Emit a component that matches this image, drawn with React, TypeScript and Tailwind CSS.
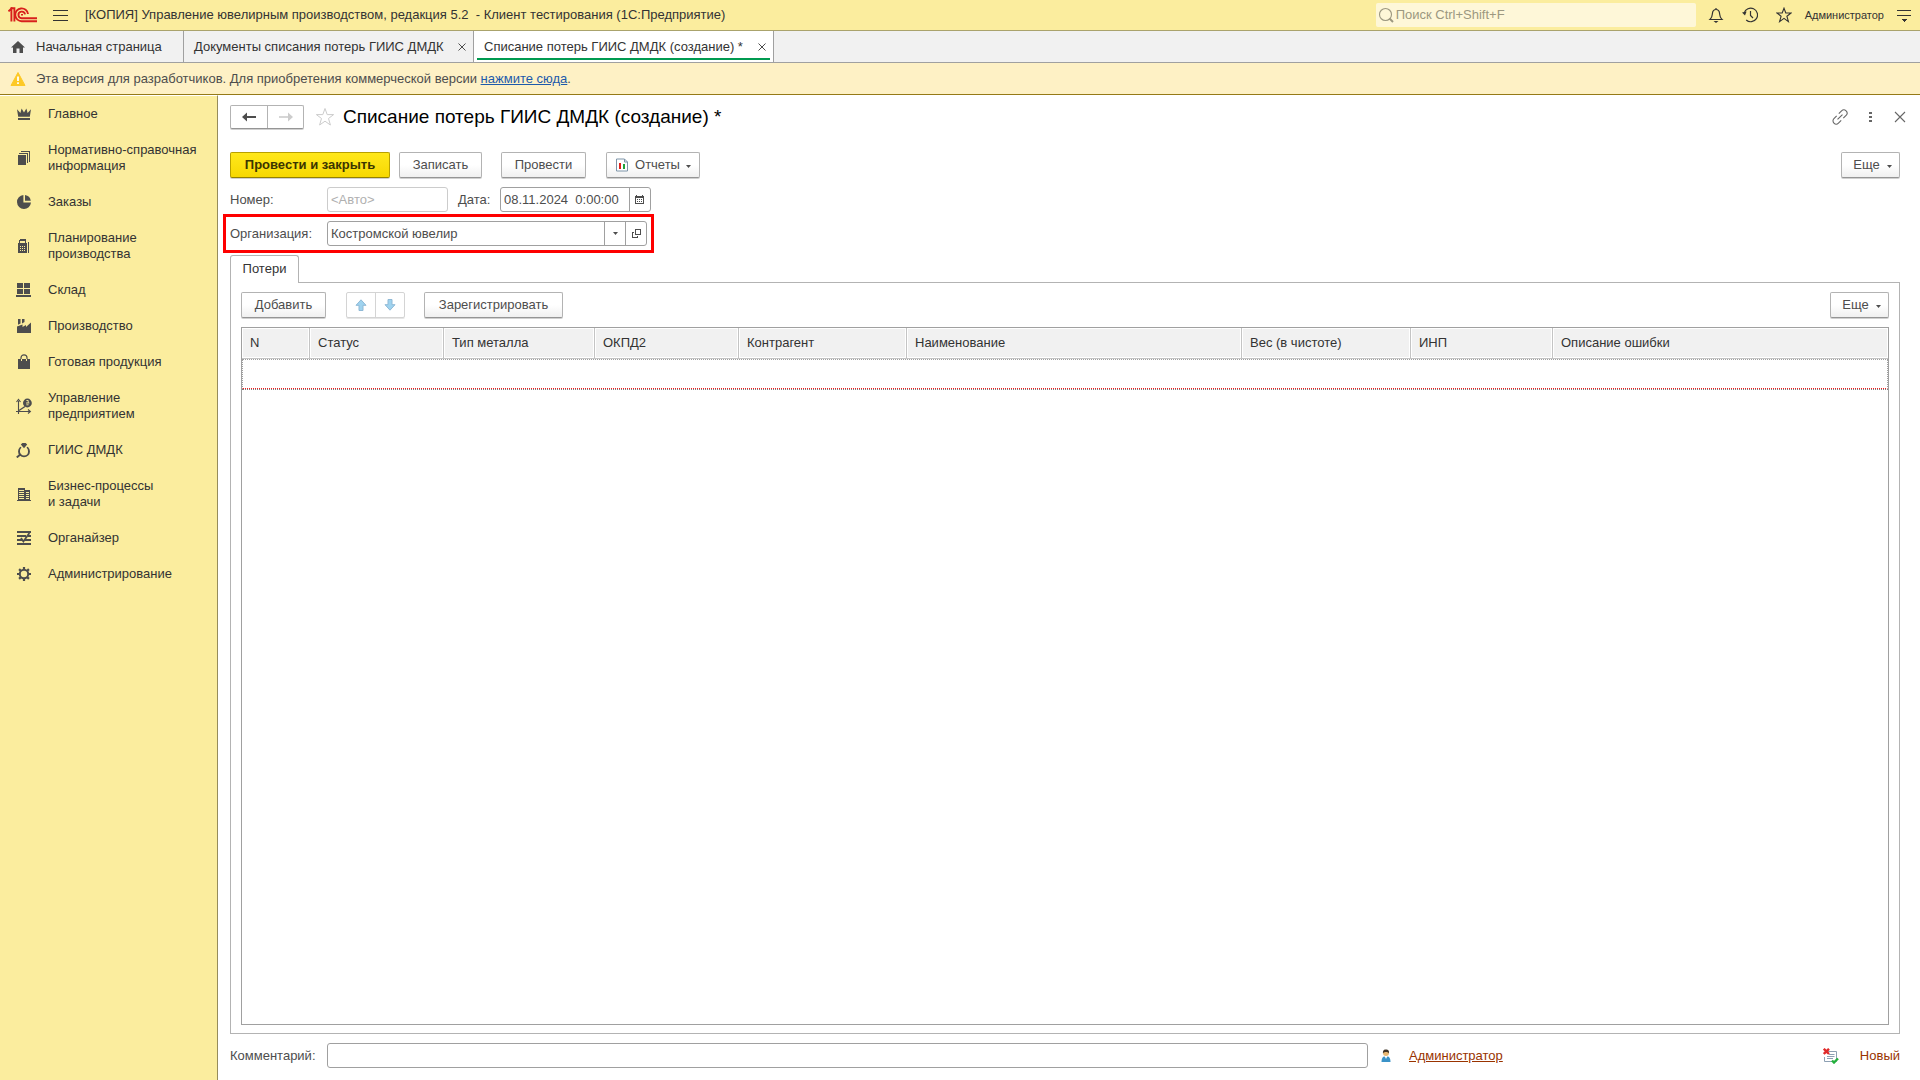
import type { ReactNode } from 'react';

type IconProps = { children: ReactNode; size?: number; className?: string; crisp?: boolean };

function Icon({ children, size = 16, className = '', crisp = false }: IconProps) {
  return (
    <svg
      width={size}
      height={size}
      viewBox={`0 0 ${size} ${size}`}
      fill="none"
      stroke="currentColor"
      shapeRendering={crisp ? 'crispEdges' : 'auto'}
      className={`shrink-0 ${className}`}
      aria-hidden="true"
    >
      {children}
    </svg>
  );
}

function Logo() {
  return (
    <svg width="30" height="16" viewBox="0 0 30 16" fill="none" stroke="#d8201c" strokeWidth="1.9" className="shrink-0" aria-label="1С">
      <path d="M0.5 4.4 L3.4 1.6 V14.6" />
      <path d="M2.5 1.2 H6.4 V14.6" />
      <path d="M20 7 A6.4 6.4 0 1 0 14 14.2 H29" />
      <path d="M17 7.4 A3.3 3.3 0 1 0 14 11.2 H29" />
      <path d="M13 7.8 h2" strokeWidth="1.4" />
    </svg>
  );
}

const solid = { fill: 'currentColor', stroke: 'none' };

const sections: { label: string[]; icon: ReactNode }[] = [
  {
    label: ['Главное'],
    icon: (
      <g {...solid}>
        <path d="M1 3.2 L4.4 7 L5.6 2.6 L8 6.6 L10.4 2.6 L11.6 7 L15 3.2 L13.8 10.8 H2.2 Z" />
        <path d="M2 12 H14 V14 H2 Z" />
      </g>
    ),
  },
  {
    label: ['Нормативно-справочная', 'информация'],
    icon: (
      <g {...solid} shapeRendering="crispEdges">
        <path d="M2 5 H10 V15 H2 Z" />
        <path d="M3 3 H12 V13 H11 V4 H3 Z" />
        <path d="M5 1 H14 V12 H13 V2 H5 Z" />
      </g>
    ),
  },
  {
    label: ['Заказы'],
    icon: (
      <g {...solid}>
        <path d="M7.4 1 V8.6 H15 A7 7 0 1 1 7.4 1 Z" />
        <path d="M9 1 A7 7 0 0 1 14.8 6.8 H9 Z" />
      </g>
    ),
  },
  {
    label: ['Планирование', 'производства'],
    icon: (
      <g {...solid} shapeRendering="crispEdges">
        <path fillRule="evenodd" d="M4 1 H10 V5 H11 V15 H2 V5 H3 V2 H4 Z M4 3 V5 H9 V3 Z M4 8 H5 V9 H4 Z M6 8 H7 V9 H6 Z M8 8 H9 V9 H8 Z M4 10 H5 V11 H4 Z M6 10 H7 V11 H6 Z M8 10 H9 V11 H8 Z M4 12 H5 V13 H4 Z M6 12 H7 V13 H6 Z M8 12 H9 V13 H8 Z" />
        <path d="M12 4 H13 V15 H12 Z" />
      </g>
    ),
  },
  {
    label: ['Склад'],
    icon: (
      <g {...solid} shapeRendering="crispEdges">
        <path d="M1 1 H7 V6 H1 Z M8 1 H14 V6 H8 Z M1 7 H7 V12 H1 Z M8 7 H14 V12 H8 Z M0 13 H15 V15 H0 Z" />
      </g>
    ),
  },
  {
    label: ['Производство'],
    icon: (
      <g {...solid}>
        <path d="M1 15 V8.5 L6.5 6.6 V9 L10 7 V9 L15 4.5 V15 Z" />
        <path d="M2 1 H4.5 V5.4 L2 6.8 Z M6 1 H8.5 V4 L6 5.4 Z" />
      </g>
    ),
  },
  {
    label: ['Готовая продукция'],
    icon: (
      <g>
        <path {...solid} d="M2 5 H14 V15 H2 Z" />
        <path d="M5.5 7 V5" stroke="#fbed9e" />
        <path d="M10.5 7 V5" stroke="#fbed9e" />
        <path d="M5 5 V3.8 A3 3 0 0 1 11 3.8 V5" strokeWidth="1.2" />
      </g>
    ),
  },
  {
    label: ['Управление', 'предприятием'],
    icon: (
      <g>
        <path d="M2.5 16 V3 M0 13.5 H14 M0.5 4 L2.5 1.5 L4.5 4 M12 11.5 L14.4 13.5 L12 15.5" strokeWidth="1.1" />
        <path d="M3 12.5 L9 8.5" strokeWidth="1.3" />
        <circle cx="11.4" cy="5" r="4.4" {...solid} />
        <path d="M10.4 2.5 H12.2 V5 H10 M12.2 5 H13.4 M10.4 6.8 H12.6" stroke="#fbed9e" strokeWidth="0.9" />
      </g>
    ),
  },
  {
    label: ['ГИИС ДМДК'],
    icon: (
      <g>
        <circle cx="8" cy="9.4" r="5" strokeWidth="1.9" />
        <path d="M4.6 3 H11.4 L8 7.6 Z" fill="#fbed9e" stroke="#fbed9e" strokeWidth="2" />
        <path {...solid} d="M4.8 2.6 L6.4 1 H9.6 L11.2 2.6 L8 6.2 Z" />
        <path d="M4.6 12.2 L0.8 15.4" strokeWidth="2" />
      </g>
    ),
  },
  {
    label: ['Бизнес-процессы', 'и задачи'],
    icon: (
      <g {...solid} shapeRendering="crispEdges">
        <path fillRule="evenodd" d="M2 2 H9 V14 H2 Z M3 4 H8 V5 H3 Z M3 6 H8 V7 H3 Z M3 8 H8 V9 H3 Z M3 10 H8 V11 H3 Z M3 12 H8 V13 H3 Z" />
        <path fillRule="evenodd" d="M9 4 H14 V14 H9 Z M10 6 H13 V7 H10 Z M10 8 H13 V9 H10 Z M10 10 H13 V11 H10 Z M10 12 H13 V13 H10 Z" />
        <path d="M1 14 H15 V15 H1 Z" />
      </g>
    ),
  },
  {
    label: ['Органайзер'],
    icon: (
      <g>
        <path {...solid} d="M1 1 H15 V3 H1 Z M1 5 H10 V7 H1 Z M12 5 H15 V7 H12 Z M1 9 H6 V11 H1 Z M9 9 H15 V11 H9 Z M1 13 H15 V15 H1 Z" />
        <path d="M5 8 L7.4 11.4 L13.4 3" strokeWidth="1.8" />
      </g>
    ),
  },
  {
    label: ['Администрирование'],
    icon: (
      <g>
        <circle cx="8" cy="8" r="4.2" strokeWidth="2" />
        <path d="M8 1 V4 M8 12 V15 M1 8 H4 M12 8 H15 M3.1 3.1 L5.2 5.2 M10.8 10.8 L12.9 12.9 M12.9 3.1 L10.8 5.2 M3.1 12.9 L5.2 10.8" strokeWidth="2.2" />
      </g>
    ),
  },
];

const columns = [
  { title: 'N', width: 'w-[68px]' },
  { title: 'Статус', width: 'w-[134px]' },
  { title: 'Тип металла', width: 'w-[151px]' },
  { title: 'ОКПД2', width: 'w-[144px]' },
  { title: 'Контрагент', width: 'w-[168px]' },
  { title: 'Наименование', width: 'w-[335px]' },
  { title: 'Вес (в чистоте)', width: 'w-[169px]' },
  { title: 'ИНП', width: 'w-[142px]' },
  { title: 'Описание ошибки', width: '' },
];

const buttonBase =
  'flex h-[26px] items-center justify-center rounded-[2px] border border-[#b3b3b3] border-b-[#959595] bg-linear-to-b from-white from-50% to-[#f0f0f0] text-[#4d4d4d] shadow-[0_1px_0_#d0d0d0]';

function Caret() {
  return (
    <svg width="5" height="3" viewBox="0 0 5 3" fill="#4d4d4d" className="shrink-0" aria-hidden="true">
      <path d="M0 0 H5 L2.5 3 Z" />
    </svg>
  );
}

function MoreButton() {
  return (
    <button type="button" className={`${buttonBase} w-[59px] gap-[7px] pl-1`}>
      Еще
      <span className="pt-[3px]">
        <Caret />
      </span>
    </button>
  );
}

function CloseMark() {
  return (
    <Icon size={8} className="text-[#4d4d4d]">
      <path d="M0.5 0.5 L7.5 7.5 M7.5 0.5 L0.5 7.5" strokeWidth="1" />
    </Icon>
  );
}

function TopBar() {
  return (
    <header className="flex h-[31px] items-center border-b border-[#aaa36c] bg-[#fbed9e] pr-2 pl-2">
      <Logo />
      <button type="button" aria-label="Меню" className="ml-[15px] flex w-[15px] flex-col gap-1">
        <span className="h-px bg-[#333]" />
        <span className="h-px bg-[#333]" />
        <span className="h-px bg-[#333]" />
      </button>
      <h1 className="ml-[17px] whitespace-pre">
        {'[КОПИЯ] Управление ювелирным производством, редакция 5.2  - Клиент тестирования (1С:Предприятие)'}
      </h1>
      <label className="ml-auto flex h-6 w-[320px] items-center rounded-[2px] bg-[#fef7d8] pl-[2px] text-[#9c9880]">
        <Icon size={17}>
          <circle cx="7.5" cy="7.5" r="6" strokeWidth="1.1" />
          <path d="M11.5 11.5 L15 15" strokeWidth="2" />
        </Icon>
        <input
          type="search"
          aria-label="Поиск"
          placeholder="Поиск Ctrl+Shift+F"
          className="min-w-0 flex-1 bg-transparent pb-px pl-px outline-none placeholder:text-[#9c9880]"
        />
      </label>
      <button type="button" aria-label="Уведомления" className="ml-3">
        <Icon>
          <path d="M8 1 V2.5 M2 12.5 C4.2 10.5 4.2 9 4.4 6.6 C4.6 4 6 2.5 8 2.5 C10 2.5 11.4 4 11.6 6.6 C11.8 9 11.8 10.5 14 12.5 Z" strokeWidth="1.2" />
          <path d="M5.5 14 H10.5 L8 16 Z" {...solid} />
        </Icon>
      </button>
      <button type="button" aria-label="История" className="ml-[18px]">
        <Icon>
          <path d="M2.2 6 A6.8 6.8 0 1 1 4.2 13 M8.5 4 V8.4 L11 11" strokeWidth="1.2" />
          <path d="M0 5.4 L4.6 4.6 L3 8.4 Z" {...solid} />
        </Icon>
      </button>
      <button type="button" aria-label="Избранное" className="ml-[18px]">
        <Icon>
          <path d="M8 1.2 L9.8 6 H15 L10.9 9.2 L12.4 14.6 L8 11.4 L3.6 14.6 L5.1 9.2 L1 6 H6.2 Z" strokeWidth="1.1" />
        </Icon>
      </button>
      <button type="button" className="ml-[13px] text-[11px]">Администратор</button>
      <button type="button" aria-label="Настройки" className="ml-3">
        <Icon crisp>
          <path d="M1 3.5 H15 M1 8.5 H15" />
          <path d="M5 12 H11 L8 15 Z" {...solid} />
        </Icon>
      </button>
    </header>
  );
}

function TabBar() {
  return (
    <nav className="flex h-8 border-b border-[#a0a0a0] bg-[#f1f1f1]">
      <button type="button" className="flex w-[184px] items-center gap-[10px] border-r border-[#a0a0a0] pl-[10px]">
        <Icon className="text-[#4d4d4d]">
          <path d="M8 2 L15 8.6 H13 V14 H9.5 V9.5 H6.5 V14 H3 V8.6 H1 Z" {...solid} />
        </Icon>
        Начальная страница
      </button>
      <div className="flex w-[290px] items-center justify-between border-r border-[#a0a0a0] pr-[7px] pl-[10px]">
        <button type="button">Документы списания потерь ГИИС ДМДК</button>
        <button type="button" aria-label="Закрыть вкладку"><CloseMark /></button>
      </div>
      <div className="flex w-[300px] border-r border-[#a0a0a0] bg-white px-[3px] pb-[2px]">
        <div className="flex flex-1 items-center justify-between border-b-2 border-[#009a50] pt-1 pr-1 pl-[7px]">
          <button type="button">Списание потерь ГИИС ДМДК (создание) *</button>
          <button type="button" aria-label="Закрыть вкладку"><CloseMark /></button>
        </div>
      </div>
    </nav>
  );
}

function Notice() {
  return (
    <div className="flex h-8 items-center gap-[10px] border-b border-[#957a17] bg-[#fef1c5] pl-[10px] text-[#4d4d4d]">
      <Icon>
        <path d="M8 1.5 L15 14.5 H1 Z" fill="#fdc926" stroke="#fdc926" strokeLinejoin="round" />
        <path d="M8 5.5 V10 M8 11.3 V13" stroke="#fff" strokeWidth="1.8" />
      </Icon>
      <p>
        Эта версия для разработчиков. Для приобретения коммерческой версии{' '}
        <a href="#buy" className="text-[#1d5aab] underline">нажмите сюда</a>.
      </p>
    </div>
  );
}

function Sidebar() {
  return (
    <nav className="w-[218px] shrink-0 border-t border-r border-t-white border-r-[#968c5b] bg-[#fbed9e]">
      {sections.map((section) => (
        <a key={section.label[0]} href="#section" className="flex items-center gap-4 py-[10px] pl-4 leading-4">
          <Icon className="text-[#4d4d4d]">{section.icon}</Icon>
          <span className="flex flex-col">
            {section.label.map((line) => (
              <span key={line}>{line}</span>
            ))}
          </span>
        </a>
      ))}
    </nav>
  );
}

function FormHeader() {
  return (
    <div className="-mr-2 flex h-[44px] items-center">
      <div className="flex h-6 rounded-[2px] border border-[#b3b3b3] border-b-[#959595] shadow-[0_1px_0_#d0d0d0]">
        <button type="button" aria-label="Назад" className="flex w-[37px] items-center justify-center border-r border-[#b3b3b3] text-[#4d4d4d]">
          <Icon>
            <path d="M2 8 H15" strokeWidth="2" />
            <path d="M1 8 L6 3.5 V12.5 Z" {...solid} />
          </Icon>
        </button>
        <button type="button" aria-label="Вперед" disabled className="flex w-[35px] items-center justify-center text-[#ccc]">
          <Icon>
            <path d="M1 8 H14" strokeWidth="1.6" />
            <path d="M15 8 L10 3.5 V12.5 Z" {...solid} />
          </Icon>
        </button>
      </div>
      <button type="button" aria-label="В избранное" className="ml-[11px] text-[#ccc]">
        <Icon size={20}>
          <path d="M10 1.5 L12.2 7.6 H18.6 L13.5 11.5 L15.4 18 L10 14.2 L4.6 18 L6.5 11.5 L1.4 7.6 H7.8 Z" />
        </Icon>
      </button>
      <h2 className="ml-2 text-[19px] text-black">Списание потерь ГИИС ДМДК (создание) *</h2>
      <div className="ml-auto flex items-center text-[#666]">
        <button type="button" aria-label="Ссылка">
          <Icon>
            <g transform="rotate(-45 8 8)" strokeWidth="1.1">
              <path d="M6.5 4.8 H2.6 A3.2 3.2 0 0 0 2.6 11.2 H6.5 M9.5 4.8 H13.4 A3.2 3.2 0 0 1 13.4 11.2 H9.5 M4.5 8 H11.5" />
            </g>
          </Icon>
        </button>
        <button type="button" aria-label="Действия" className="ml-[14px]">
          <Icon crisp>
            <path d="M7 3 H10 V5 H7 Z M7 7 H10 V9 H7 Z M7 11 H10 V13 H7 Z" {...solid} />
          </Icon>
        </button>
        <button type="button" aria-label="Закрыть" className="ml-[14px]">
          <Icon>
            <path d="M3 3 L13 13 M13 3 L3 13" strokeWidth="1.1" />
          </Icon>
        </button>
      </div>
    </div>
  );
}

const fieldBox = 'flex h-[25px] rounded-[3px] border border-[#a0a0a0] bg-white';

function ReportIcon() {
  return (
    <Icon size={14}>
      <path d="M1.5 1 H9.5 L12.5 4 V13 H1.5 Z" fill="#fff" stroke="#7d94a8" />
      <path d="M9.5 1 V4 H12.5" stroke="#7d94a8" />
      <path d="M4 5 H6 V11 H4 Z" fill="#e0201b" stroke="none" />
      <path d="M8 6 H10 V11 H8 Z" fill="#21a33a" stroke="none" />
    </Icon>
  );
}

function Content() {
  return (
    <main className="flex min-w-0 flex-1 flex-col bg-white pr-5 pl-3 text-[#4d4d4d]">
      <FormHeader />
      <div className="mt-[13px] flex">
        <button
          type="button"
          className="flex h-[26px] w-[160px] items-center justify-center rounded-[2px] border border-[#b8a000] border-b-[#948100] bg-linear-to-b from-[#ffe81a] to-[#f7d800] font-bold text-[#3b3500] shadow-[0_1px_0_#d0d0d0]"
        >
          Провести и закрыть
        </button>
        <button type="button" className={`${buttonBase} ml-[9px] w-[83px]`}>Записать</button>
        <button type="button" className={`${buttonBase} ml-[19px] w-[85px]`}>Провести</button>
        <button type="button" className={`${buttonBase} ml-5 w-[94px] gap-[6px]`}>
          <ReportIcon />
          Отчеты
          <span className="pt-[3px]">
            <Caret />
          </span>
        </button>
        <div className="ml-auto">
          <MoreButton />
        </div>
      </div>

      <div className="mt-[9px] flex items-center">
        <label htmlFor="number" className="w-[97px]">Номер:</label>
        <input
          id="number"
          placeholder="<Авто>"
          readOnly
          className="h-[25px] w-[121px] rounded-[3px] border border-[#ccc] px-[3px] outline-none placeholder:text-[#b0b0b0]"
        />
        <label htmlFor="date" className="w-[52px] pl-[10px]">Дата:</label>
        <div className={`${fieldBox} w-[151px]`}>
          <input id="date" defaultValue="08.11.2024  0:00:00" className="min-w-0 flex-1 pl-[3px] outline-none" />
          <button type="button" aria-label="Выбрать дату" className="flex w-[21px] items-center justify-center border-l border-[#a0a0a0]">
            <Icon size={10} crisp>
              <path fillRule="evenodd" d="M0 1 H1 V0 H2 V1 H7 V0 H8 V1 H9 V9 H0 Z M1 3 V8 H8 V3 Z" {...solid} />
              <path d="M2 4.5 H7 M2 6.5 H7" strokeDasharray="1 1" />
            </Icon>
          </button>
        </div>
      </div>

      <div className="mt-[2px] -ml-[7px] flex h-[39px] w-[431px] items-center border-3 border-[#fe0000] pl-1">
        <label htmlFor="organization" className="w-[97px]">Организация:</label>
        <div className={`${fieldBox} w-[320px]`}>
          <input id="organization" defaultValue="Костромской ювелир" className="min-w-0 flex-1 pl-[3px] outline-none" />
          <button type="button" aria-label="Выбрать" className="flex w-[21px] items-center justify-center border-l border-[#a0a0a0]">
            <Caret />
          </button>
          <button type="button" aria-label="Открыть" className="flex w-[21px] items-center justify-center border-l border-[#a0a0a0]">
            <Icon size={9} crisp>
              <path d="M3.5 0.5 H8.5 V5.5 H3.5 Z M2 3.5 H0.5 V8.5 H5.5 V7" />
            </Icon>
          </button>
        </div>
      </div>

      <div role="tablist" className="z-10 mt-[2px] -mb-px flex">
        <button
          type="button"
          role="tab"
          aria-selected="true"
          className="h-7 w-[69px] rounded-t-[3px] border border-b-0 border-[#b3b3b3] bg-white pb-px text-[#333]"
        >
          Потери
        </button>
      </div>
      <section role="tabpanel" className="flex flex-1 flex-col border border-[#b3b3b3] px-[10px] pt-[9px] pb-2">
        <div className="flex">
          <button type="button" className={`${buttonBase} w-[85px]`}>Добавить</button>
          <div className="ml-5 flex h-[26px] rounded-[2px] border border-[#d4d4d4] text-[#9fd3ef] shadow-[0_1px_0_#e6e6e6]">
            <button type="button" aria-label="Вверх" disabled className="flex w-[29px] items-center justify-center border-r border-[#d4d4d4]">
              <Icon size={12}>
                <path d="M6 0.8 L11 6.3 H8 V11.5 H4 V6.3 H1 Z" fill="currentColor" stroke="#8fb9d6" />
              </Icon>
            </button>
            <button type="button" aria-label="Вниз" disabled className="flex w-[28px] items-center justify-center">
              <Icon size={12}>
                <path d="M6 11.2 L1 5.7 H4 V0.5 H8 V5.7 H11 Z" fill="currentColor" stroke="#8fb9d6" />
              </Icon>
            </button>
          </div>
          <button type="button" className={`${buttonBase} ml-[19px] w-[139px]`}>Зарегистрировать</button>
          <div className="ml-auto">
            <MoreButton />
          </div>
        </div>

        <div className="mt-[9px] flex-1 border border-[#a0a0a0]">
          <table className="w-full table-fixed border-separate border-spacing-0 text-left text-[#333]">
            <thead>
              <tr className="h-[31px]">
                {columns.map((column) => (
                  <th
                    key={column.title}
                    scope="col"
                    className={`${column.width} border-r border-b border-[#c4c4c4] bg-[#f1f1f1] p-0 pl-2 font-normal shadow-[inset_0_0_0_1px_#fff] last:border-r-0`}
                  >
                    {column.title}
                  </th>
                ))}
              </tr>
            </thead>
            <tbody>
              <tr>
                <td colSpan={columns.length} className="h-[31px] border-b border-dotted border-[#808080] p-0">
                  <div className="h-[30px] border border-dotted border-[#a0a0a0] border-b-[#f02020]" />
                </td>
              </tr>
            </tbody>
          </table>
        </div>
      </section>

      <footer className="mt-[9px] mb-3 flex items-center">
        <label htmlFor="comment" className="w-[97px]">Комментарий:</label>
        <input id="comment" className="h-[25px] min-w-0 flex-1 rounded-[3px] border border-[#a0a0a0] px-[3px] outline-none" />
        <div className="flex w-[532px] items-center pl-[11px] text-[#993300]">
          <Icon size={14}>
            <path d="M2.5 13 C2.5 9.5 3.5 8 5 7.5 H9 C10.5 8 11.5 9.5 11.5 13 Z" fill="#3b93c8" stroke="none" />
            <path d="M5.5 7 H8.5 L7 10 Z" fill="#fff" stroke="none" />
            <circle cx="7" cy="4" r="3" fill="#e9b872" stroke="none" />
            <path d="M4 4.5 C3.5 1 5.5 0.5 7 0.5 C8.5 0.5 10.5 1 10 4.5 C9.5 2.5 4.5 2.5 4 4.5 Z" fill="#3f3326" stroke="none" />
          </Icon>
          <a href="#author" className="ml-4 underline">Администратор</a>
          <div className="ml-auto flex items-center gap-[21px]">
            <Icon>
              <path d="M3.5 3.5 H13.5 V13.5 H1.5 V9" fill="#fff" stroke="#8da0b3" />
              <path d="M6 6.5 H11.5 M4 8.5 H11.5 M4 10.5 H10" stroke="#8da0b3" />
              <path d="M0.8 0.8 L6 6 M6 0.8 L0.8 6" stroke="#e02a2a" strokeWidth="2.4" />
              <path d="M9 12.5 L11 14.5 L15 10.5" stroke="#23b03c" strokeWidth="2.4" />
            </Icon>
            <span>Новый</span>
          </div>
        </div>
      </footer>
    </main>
  );
}

export default function App() {
  return (
    <div className="flex min-h-screen flex-col bg-white font-['Liberation_Sans',Arial,sans-serif] text-[13px] leading-4 text-[#333]">
      <TopBar />
      <TabBar />
      <Notice />
      <div className="flex flex-1">
        <Sidebar />
        <Content />
      </div>
    </div>
  );
}
